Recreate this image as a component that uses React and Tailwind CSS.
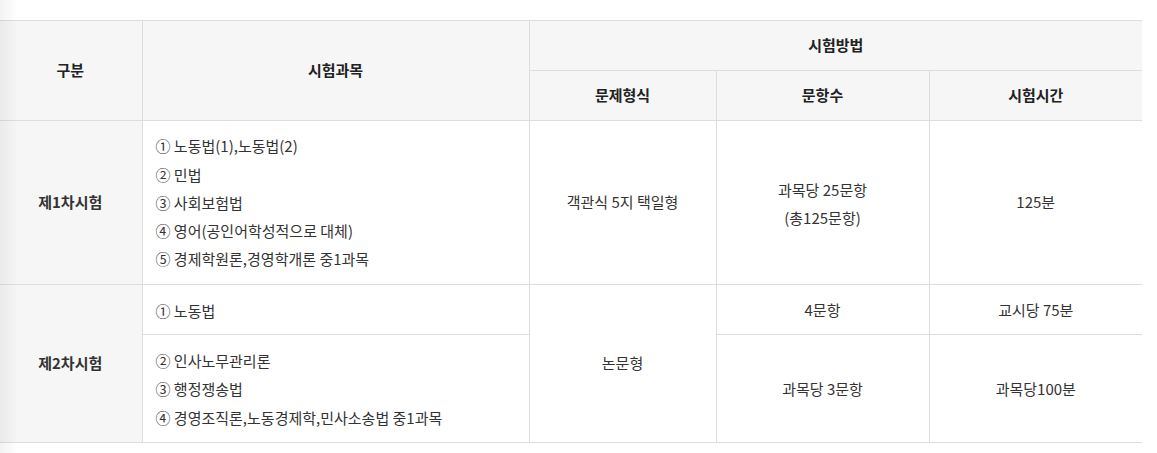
export default function App() {
  const th = "border border-[#dddddd] bg-[#f6f6f6] font-bold text-[#222] text-center align-middle";
  const td = "border border-[#dddddd] text-[#333] text-center align-middle";
  const li = "leading-[28.3px]";
  return (
    <div className="relative w-[1157px] h-[453px] bg-white overflow-hidden" style={{ fontFamily: '"Noto Sans CJK KR", "Noto Sans", sans-serif' }}>
      <div className="pt-[20px]">
        <table className="w-[1142px] border-collapse table-fixed text-[15px] border-l-0 -ml-px">
          <colgroup>
            <col className="w-[143px]" />
            <col className="w-[387px]" />
            <col className="w-[187px]" />
            <col className="w-[213px]" />
            <col className="w-[213px]" />
          </colgroup>
          <thead>
            <tr className="h-[50px]">
              <th rowSpan={2} className={th + " border-l-0"}>구분</th>
              <th rowSpan={2} className={th}>시험과목</th>
              <th colSpan={3} className={th + " border-r-0"}>시험방법</th>
            </tr>
            <tr className="h-[50px]">
              <th className={th}>문제형식</th>
              <th className={th}>문항수</th>
              <th className={th + " border-r-0"}>시험시간</th>
            </tr>
          </thead>
          <tbody>
            <tr className="h-[164px]">
              <td className={td + " bg-[#f6f6f6] font-bold text-[#222] border-l-0"}>제1차시험</td>
              <td className={td + " text-left pl-[13px] pr-[14px]"}>
                <ul className="pt-[1px]">
                  <li className={li}>① 노동법(1),노동법(2)</li>
                  <li className={li}>② 민법</li>
                  <li className={li}>③ 사회보험법</li>
                  <li className={li}>④ 영어(공인어학성적으로 대체)</li>
                  <li className={li}>⑤ 경제학원론,경영학개론 중1과목</li>
                </ul>
              </td>
              <td className={td}>객관식 5지 택일형</td>
              <td className={td}>
                <div className="leading-[28.3px] pt-[3px]">과목당 25문항<br />(총125문항)</div>
              </td>
              <td className={td + " border-r-0"}>125분</td>
            </tr>
            <tr className="h-[50px]">
              <td rowSpan={2} className={td + " bg-[#f6f6f6] font-bold text-[#222] border-l-0"}>제2차시험</td>
              <td className={td + " text-left pl-[13px] pr-[14px]"}>
                <div className="leading-[28.3px] pt-[3px]">① 노동법</div>
              </td>
              <td rowSpan={2} className={td}>논문형</td>
              <td className={td}><div className="pt-[2px]">4문항</div></td>
              <td className={td + " border-r-0"}><div className="pt-[2px]">교시당 75분</div></td>
            </tr>
            <tr className="h-[108px]">
              <td className={td + " text-left pl-[13px] pr-[14px]"}>
                <ul className="pt-[2px]">
                  <li className={li}>② 인사노무관리론</li>
                  <li className={li}>③ 행정쟁송법</li>
                  <li className={li}>④ 경영조직론,노동경제학,민사소송법 중1과목</li>
                </ul>
              </td>
              <td className={td}><div className="pt-[2px]">과목당 3문항</div></td>
              <td className={td + " border-r-0"}><div className="pt-[2px]">과목당100분</div></td>
            </tr>
          </tbody>
        </table>
      </div>
      <div className="pointer-events-none absolute left-0 top-0 h-full w-[18px] bg-gradient-to-r from-black/[0.05] to-transparent" />
    </div>
  );
}
